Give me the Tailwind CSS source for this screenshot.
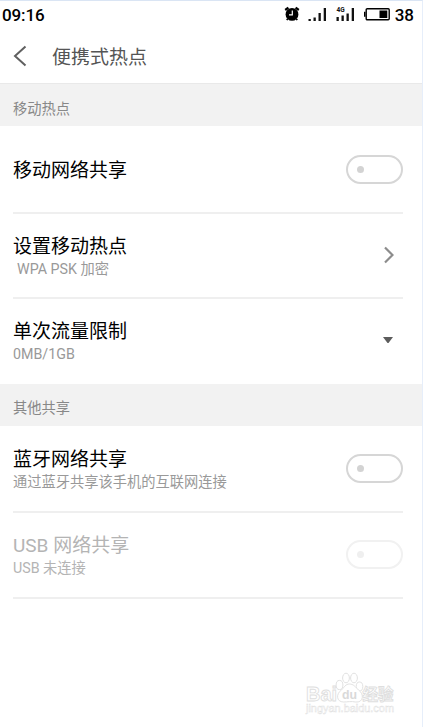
<!DOCTYPE html>
<html lang="zh-CN">
<head>
  <meta charset="UTF-8">
  <meta name="viewport" content="width=device-width, initial-scale=1.0">
  <title>便携式热点</title>
  <script src="https://cdn.jsdelivr.net/npm/@tailwindcss/browser@4"></script>
</head>
<body class="bg-white font-[Roboto,'Noto_Sans_CJK_SC',sans-serif]">
  <div class="relative w-full h-[727px] overflow-hidden border-t border-r border-t-[#dae5f4] border-r-[#e6eefa]">

    <!-- Status bar -->
    <div class="flex items-center justify-between h-[28px] pl-0.5 pr-2 text-black font-medium text-[17px] leading-none">
      <span class="tracking-[-0.1px]">09:16</span>
      <div class="flex items-center">
        <svg class="w-4 h-4 mr-2 mb-0.5" viewBox="0 0 16 16">
          <circle cx="8" cy="8.400" r="6.400" fill="#000" />
          <path d="M1.200 4L4.400 1.600M14.800 4L11.600 1.600" stroke="#000" stroke-width="2.200" fill="none" />
          <path d="M3.600 12.800L2.800 14.200M12.400 12.800L13.200 14.200" stroke="#000" stroke-width="1.600" fill="none" />
          <path d="M8.300 4.600V8.800H5" stroke="#fff" stroke-width="1.200" fill="none" />
        </svg>
        <svg class="w-[19px] h-4 mr-[9px]" viewBox="0 0 19 16">
          <path d="M0.500 12h2.300v2H0.500zM5.500 10.500h2.300V14H5.500zM10.500 6h2.300v8h-2.300zM15.700 1h2.300V14h-2.300z" fill="#111" />
        </svg>
        <svg class="w-[19px] h-4 mr-[9px] overflow-visible" viewBox="0 0 19 16">
          <path d="M0.500 10h2.300v4H0.500zM5.500 8.500h2.300V14H5.500zM10.500 6.500h2.300V14h-2.300zM15.700 1h2.300V14h-2.300z" fill="#111" />
          <text x="0.500" y="4.800" font-size="6.500" font-weight="700" fill="#111">4G</text>
        </svg>
        <svg class="w-[26px] h-4 mr-[5px] mb-0.5" viewBox="0 0 26 16">
          <rect x="2.200" y="2.700" width="23" height="11" rx="1" fill="none" stroke="#000" stroke-width="1.400" />
          <path d="M0 5.700h1.500v5H0zM15.500 4.500H23.300v7.500h-7.800z" fill="#000" />
        </svg>
        <span>38</span>
      </div>
    </div>

    <!-- Title bar -->
    <header class="flex items-center h-[54px] pl-[13px]">
      <svg class="w-[14px] h-[22px]" viewBox="0 0 14 22" fill="none" stroke="#606060" stroke-width="2">
        <path d="M12.500 1.500L2 11L12.500 20.500" />
      </svg>
      <h1 class="ml-[25px] pt-0.5 text-[19px] leading-none text-[#555]">便携式热点</h1>
    </header>

    <main>
      <h2 class="flex items-center h-[43px] px-[13px] pt-[9px] bg-[#f2f2f2] border-t border-[#e9e9e9] text-[14.25px] text-[#888]">移动热点</h2>

      <div class="flex items-center justify-between h-[88px] ml-[13px] mr-[19px] border-b-2 border-[#efefef]">
        <p class="pt-[3px] text-[19px] leading-6 text-black">移动网络共享</p>
        <span class="flex items-center w-[57px] h-[29px] pl-[9px] rounded-full border-2 border-[#d6d6d6]">
          <span class="size-[7px] rounded-full bg-[#d3d3d3]"></span>
        </span>
      </div>

      <div class="flex items-center justify-between h-[85px] ml-[13px] mr-[19px] border-b-2 border-[#efefef]">
        <div class="pt-0.5">
          <p class="text-[19px] leading-6 text-black">设置移动热点</p>
          <p class="pl-1 text-[14.25px] leading-5 text-[#999]">WPA PSK 加密</p>
        </div>
        <svg class="w-[10px] h-[18px] mr-[9px] mb-px" viewBox="0 0 10 18" fill="none" stroke="#8c8c8c" stroke-width="2.200">
          <path d="M1 1.500L8.500 9L1 16.500" />
        </svg>
      </div>

      <div class="flex items-center justify-between h-[85px] ml-[13px] mr-[19px]">
        <div class="pt-px">
          <p class="text-[19px] leading-6 text-black">单次流量限制</p>
          <p class="text-[14.25px] leading-5 text-[#999]">0MB/1GB</p>
        </div>
        <svg class="w-[10px] h-[6px] mr-[10px] mb-[3px]" viewBox="0 0 10 6">
          <path d="M0 0h10L5.500 6h-1z" fill="#5c5c5c" />
        </svg>
      </div>

      <h2 class="flex items-center h-[42px] px-[13px] pt-2 bg-[#f2f2f2] text-[14.25px] text-[#888]">其他共享</h2>

      <div class="flex items-center justify-between h-[87px] ml-[13px] mr-[19px] border-b-2 border-[#efefef]">
        <div class="pt-[3px]">
          <p class="text-[19px] leading-6 text-black">蓝牙网络共享</p>
          <p class="text-[14.25px] leading-5 text-[#999]">通过蓝牙共享该手机的互联网连接</p>
        </div>
        <span class="flex items-center w-[57px] h-[29px] pl-[9px] rounded-full border-2 border-[#d6d6d6]">
          <span class="size-[7px] rounded-full bg-[#d3d3d3]"></span>
        </span>
      </div>

      <div class="flex items-center justify-between h-[86px] ml-[13px] mr-[19px] border-b-2 border-[#efefef]">
        <div class="pt-0.5">
          <p class="text-[19px] leading-6 text-[#b4b4b4]">USB 网络共享</p>
          <p class="text-[14.25px] leading-5 text-[#b4b4b4]">USB 未连接</p>
        </div>
        <span class="flex items-center w-[57px] h-[29px] mb-0.5 pl-[9px] rounded-full border-2 border-[#f1f1f1]">
          <span class="size-[7px] rounded-full bg-[#efefef]"></span>
        </span>
      </div>
    </main>

    <!-- Watermark -->
    <svg class="absolute left-[300px] top-[667px] w-[100px] h-[50px]" viewBox="0 0 100 50" fill="#fff" stroke="#dedede" stroke-width="0.900" font-family="'Liberation Sans', 'Noto Sans CJK SC', sans-serif" font-weight="700">
      <text x="6" y="32.500" font-size="21" textLength="31" lengthAdjust="spacingAndGlyphs">Bai</text>
      <ellipse cx="39.500" cy="17" rx="3.400" ry="4.600" />
      <ellipse cx="46" cy="10" rx="3.400" ry="4.800" />
      <ellipse cx="54" cy="10" rx="3.400" ry="4.800" />
      <ellipse cx="59.500" cy="18.500" rx="3.300" ry="4.500" />
      <path d="M49.500 16c-4 0-5 3-8 6-6 4-5 12 2 12 4 0 8-1 12 0 8 1 9-8 3-12-3-3-5-6-9-6z" />
      <text x="42" y="31" font-size="13" fill="#d9d9d9" stroke="none" textLength="15" lengthAdjust="spacingAndGlyphs">du</text>
      <text x="62.500" y="32" font-size="15.500" textLength="31" lengthAdjust="spacingAndGlyphs">经验</text>
      <text x="6" y="44" font-size="10" font-weight="400" stroke-width="0.400" textLength="88" lengthAdjust="spacingAndGlyphs">jingyan.baidu.com</text>
    </svg>
  </div>
</body>
</html>
